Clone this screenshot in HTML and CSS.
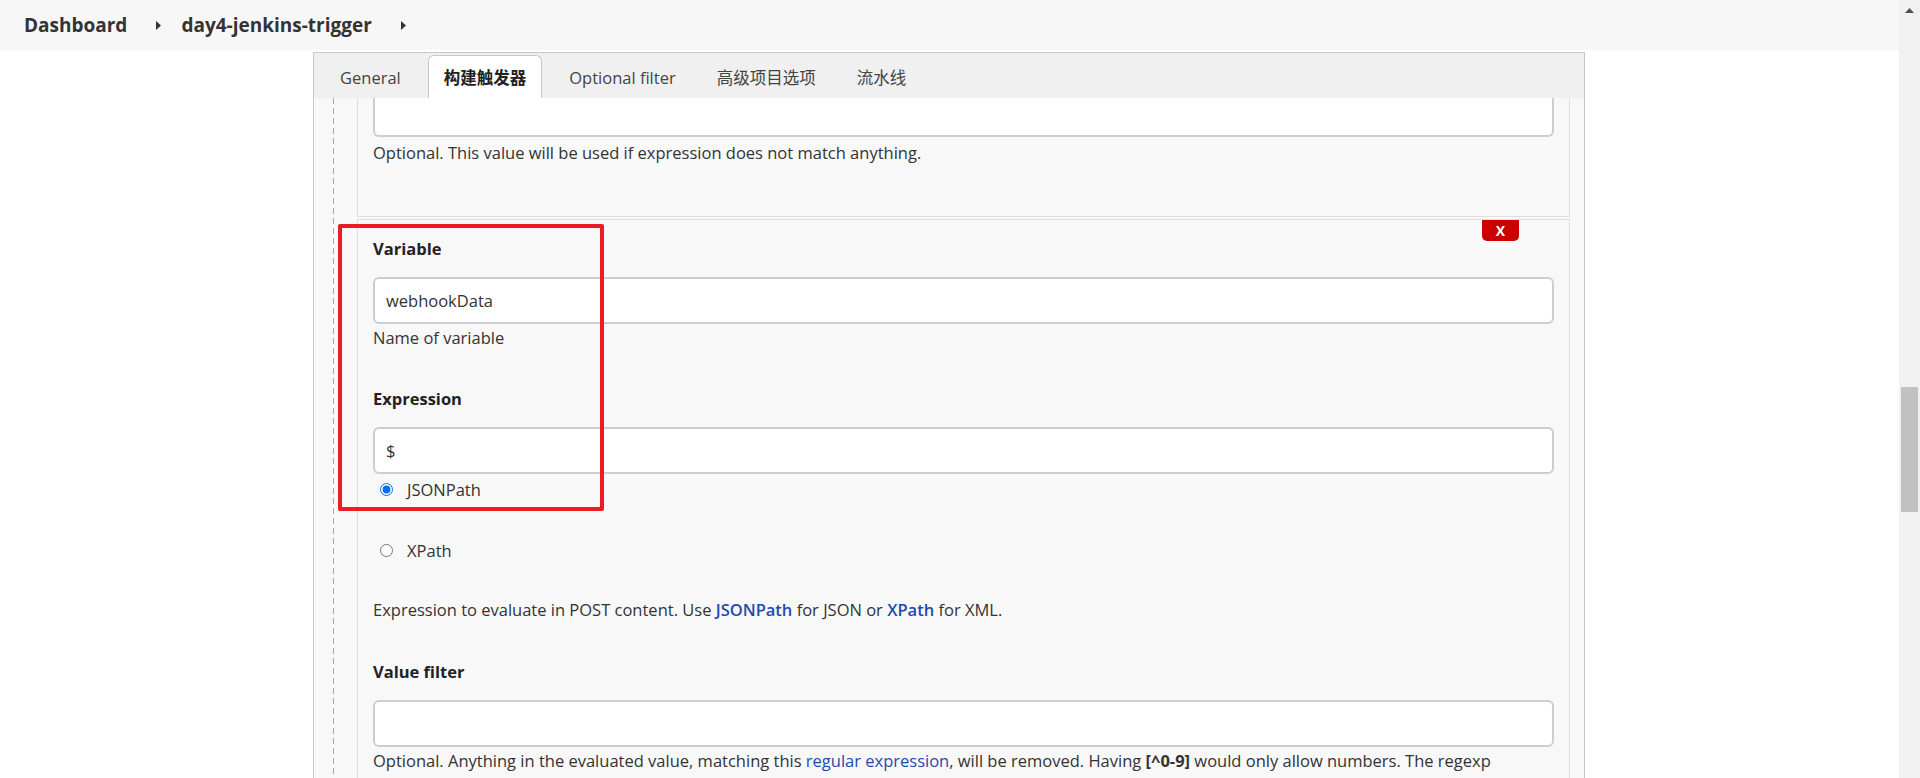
FILE: index.html
```html
<!DOCTYPE html>
<html lang="zh-CN">
<head>
<meta charset="utf-8">
<title>day4-jenkins-trigger Config [Jenkins]</title>
<link rel="stylesheet" href="styles.css">
</head>
<body>
<div class="page">
  <header class="breadcrumbs">
    <a class="crumb">Dashboard</a>
    <svg class="chev" width="5" height="9" viewBox="0 0 5 9"><path d="M0 0 L5 4.5 L0 9 Z"/></svg>
    <a class="crumb">day4-jenkins-trigger</a>
    <svg class="chev" width="5" height="9" viewBox="0 0 5 9"><path d="M0 0 L5 4.5 L0 9 Z"/></svg>
  </header>
  <main class="main">
    <div class="panel">
      <nav class="tabs">
        <span class="tab">General</span>
        <span class="tab active">构建触发器</span>
        <span class="tab">Optional filter</span>
        <span class="tab">高级项目选项</span>
        <span class="tab">流水线</span>
      </nav>
      <div class="panel-body">
        <div class="dash"></div>
        <div class="chunks">
          <section class="chunk chunk-prev">
            <div class="input input-clipped"></div>
            <div class="help">Optional. This value will be used if expression does not match anything.</div>
          </section>
          <section class="chunk chunk-cur">
            <button class="del" type="button">X</button>
            <div class="annot"></div>
            <div class="label">Variable</div>
            <div class="input">webhookData</div>
            <div class="help">Name of variable</div>
            <div class="label label-gap">Expression</div>
            <div class="input">$</div>
            <label class="radio radio-first"><input type="radio" name="exprType" checked><span>JSONPath</span></label>
            <label class="radio radio-second"><input type="radio" name="exprType"><span>XPath</span></label>
            <div class="help help-block">Expression to evaluate in POST content. Use <a class="link">JSONPath</a> for JSON or <a class="link">XPath</a> for XML.</div>
            <div class="label label-gap2">Value filter</div>
            <div class="input"></div>
            <div class="help">Optional. Anything in the evaluated value, matching this <a class="link link-light">regular expression</a>, will be removed. Having <b>[^0-9]</b> would only allow numbers. The regexp</div>
          </section>
        </div>
      </div>
    </div>
  </main>
</div>
<div class="scrollbar">
  <div class="sb-arrow"><svg width="9" height="5" viewBox="0 0 9 5"><path d="M0 5 L4.5 0 L9 5 Z"/></svg></div>
  <div class="sb-thumb"></div>
</div>
</body>
</html>
```
FILE: styles.css
```css
* { box-sizing: border-box; }

html, body {
  margin: 0;
  height: 778px;
  overflow: hidden;
}

body {
  display: flex;
  font-family: "Open Sans", "Noto Sans CJK SC", sans-serif;
  font-size: 16.5px;
  color: #333;
  background: #fff;
}

.page {
  flex: 1;
  min-width: 0;
  display: flex;
  flex-direction: column;
}

/* breadcrumbs */
.breadcrumbs {
  height: 50px;
  flex: none;
  background: #f7f7f7;
  display: flex;
  align-items: center;
  padding-left: 24px;
}

.crumb {
  font-weight: 700;
  font-size: 19px;
  color: #333;
}

.chev {
  fill: #333;
  margin: 0 20px 0 29px;
}

/* panel */
.main {
  flex: 1;
  padding: 2px 0 0 313px;
}

.panel {
  width: 1272px;
  height: 100%;
  border: 1px solid #c3cacd;
  border-bottom: none;
  display: flex;
  flex-direction: column;
  background: #f8f8f8;
}

.tabs {
  height: 45px;
  flex: none;
  background: #f0f0f0;
  display: flex;
  align-items: flex-end;
  gap: 13px;
  padding-left: 12px;
}

.tab {
  height: 43px;
  display: flex;
  align-items: center;
  padding: 0 13px;
  border: 1px solid transparent;
  border-bottom: none;
  border-radius: 6px 6px 0 0;
  color: #444;
  white-space: nowrap;
}

.tab.active {
  background: #fff;
  border-color: #c3cacd;
  font-weight: 700;
  color: #222;
  padding: 0 15px;
}

.panel-body {
  flex: 1;
  display: flex;
  padding: 0 14px 0 19px;
}

.dash {
  width: 1px;
  flex: none;
  background: repeating-linear-gradient(to bottom, #a8a8a8 0 6px, transparent 6px 10px);
  margin-right: 23px;
}

.chunks {
  flex: 1;
  display: flex;
  flex-direction: column;
  gap: 2px;
}

.chunk {
  background: #f8f8f8;
  border: 1px solid #dedede;
  padding: 0 15px;
}

.chunk-prev {
  border-top: none;
  padding-bottom: 51px;
}

.chunk-cur {
  position: relative;
  padding-top: 17px;
  border-bottom: none;
  flex: 1;
}

/* form pieces */
.label {
  font-weight: 700;
  line-height: 24px;
  color: #222;
}

.label-gap { margin-top: 37px; }
.label-gap2 { margin-top: 38px; }

.input {
  height: 47px;
  margin-top: 16px;
  background: #fff;
  border: 2px solid #c7cfd3;
  border-radius: 6px;
  padding: 0 11px;
  display: flex;
  align-items: center;
  color: #333;
}

.chunk-cur > .label:first-of-type + .input { margin-top: 17px; }

.input-clipped {
  height: 39px;
  margin-top: 0;
  border-top: none;
  border-radius: 0 0 6px 6px;
}

.help {
  line-height: 24px;
  margin-top: 2px;
}

.chunk-prev .help { margin-top: 4px; }

.help-block { margin-top: 36px; }

.link {
  color: #1f4ab0;
  font-weight: 600;
}

.link-light { font-weight: 500; }

.radio {
  display: flex;
  align-items: center;
  height: 24px;
  padding-left: 7px;
}

.radio input {
  width: 13px;
  height: 13px;
  margin: 0 14px 0 0;
  accent-color: #0a6cf0;
}

.radio-first { margin-top: 3px; }
.radio-second { margin-top: 37px; }

.del {
  position: absolute;
  top: 0;
  right: 50px;
  width: 37px;
  height: 21px;
  border: none;
  border-radius: 0 0 5px 5px;
  background: #cc0000;
  color: #fff;
  font-family: "Open Sans", sans-serif;
  font-weight: 700;
  font-size: 14px;
  padding: 0;
}

.annot {
  position: absolute;
  left: -20px;
  top: 4px;
  width: 266px;
  height: 287px;
  border: 4px solid #ed1c24;
  border-radius: 2px;
  z-index: 2;
  pointer-events: none;
}

/* fake scrollbar */
.scrollbar {
  width: 21px;
  flex: none;
  background: #f1f1f1;
  display: flex;
  flex-direction: column;
  align-items: center;
}

.sb-arrow {
  height: 21px;
  display: flex;
  align-items: center;
  justify-content: center;
  fill: #505050;
}

.sb-thumb {
  margin-top: 366px;
  width: 17px;
  height: 125px;
  background: #c1c1c1;
}
```
